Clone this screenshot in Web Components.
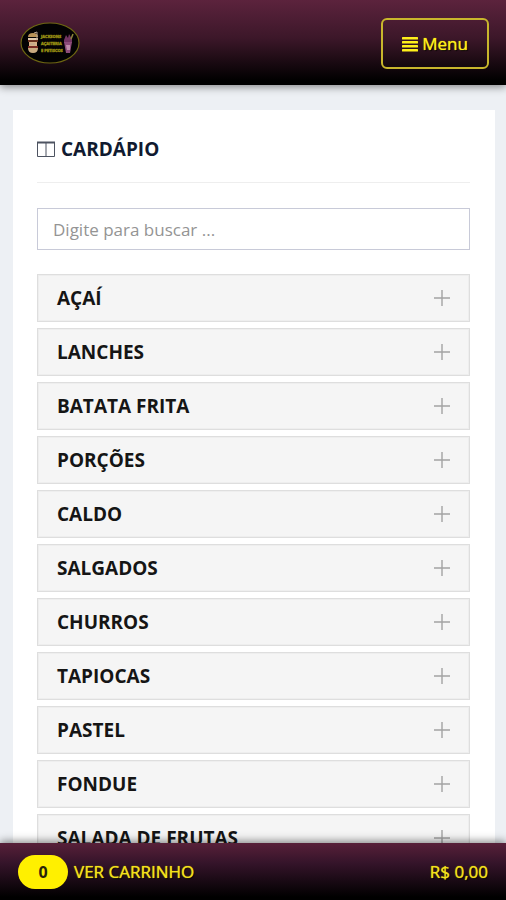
<!DOCTYPE html>
<html lang="pt-BR">
<head>
<meta charset="utf-8">
<meta name="viewport" content="width=device-width, initial-scale=1">
<title>Cardápio</title>
<style>
body { margin: 0; font-family: "Open Sans", "Noto Sans", sans-serif; background: #edf0f4; }
</style>
</head>
<body>
<menu-app></menu-app>
<script>
const define = (name, html, setup) => {
  const template = document.createElement('template');
  template.innerHTML = html;
  customElements.define(name, class extends HTMLElement {
    constructor() {
      super();
      this.attachShadow({ mode: 'open' }).append(template.content.cloneNode(true));
    }
    connectedCallback() { if (setup) setup(this, this.shadowRoot); }
  });
};

define('brand-logo', `
<style>
:host { display: block; }
a { display: block; }
svg { display: block; width: 60px; height: 42px; }
text { font: bold 4px "Open Sans", sans-serif; fill: #aaa016; stroke: #8f8712; stroke-width: .4px; }
</style>
<a href="#" aria-label="Início">
<svg viewBox="0 0 60 42">
  <ellipse cx="30" cy="21" rx="29" ry="20" fill="#030203" stroke="#6e6712" stroke-width="1.2"/>
  <path d="M8 15q0-4 5-4t5 4z" fill="#b99358"/>
  <path d="M8 16h10v2H8z" fill="#e1cbb0"/>
  <path d="M8 18h10v2H8z" fill="#69301f"/>
  <path d="M9 20h8v4H9z" fill="#d7b188"/>
  <path d="M8 24h10v2H8z" fill="#7a2c25"/>
  <path d="M8 26h10q0 5-5 5t-5-5z" fill="#c9aa81"/>
  <path d="M14 11l3-1v8M10 22h5" stroke="#b8a391" fill="none"/>
  <text x="21" y="16">JACKSONS</text>
  <text x="21" y="23">AÇAITERIA</text>
  <text x="21" y="30">E PETISCOS</text>
  <path d="M44 18l2-5 2 3 1-4 3 5v4h-8z" fill="#713460"/>
  <path d="M51 17l2-5" stroke="#8c853b" stroke-width="1.5"/>
  <path d="M44 20h8l-2 11h-4z" fill="#8d4c79"/>
  <path d="M46 23h4v5h-3z" fill="#c08dab"/>
</svg>
</a>`);

define('top-bar', `
<style>
:host { display: block; position: relative; z-index: 1; box-shadow: 0 2px 8px rgba(0,0,0,.45); }
header { display: flex; align-items: center; justify-content: space-between; height: 85px; padding: 0 17px 0 20px; background: linear-gradient(#5c233d, #3c1729 45%, #000 95%); }
button { display: flex; align-items: center; justify-content: center; gap: 4px; width: 108px; height: 51px; margin-top: 2px; padding: 0; border: 2px solid #c8b62c; border-radius: 6px; background: transparent; color: #fff01a; font: 500 17px/24px "Open Sans", sans-serif; text-shadow: 0 0 1px #fff01a, 1px 1px 1px #000; }
svg { width: 16px; height: 16px; }
</style>
<header>
  <brand-logo></brand-logo>
  <button type="button"><svg viewBox="0 0 16 16" fill="#fff01a" aria-hidden="true"><rect y="1" width="16" height="2.400" rx=".5"/><rect y="5" width="16" height="2.400" rx=".5"/><rect y="9" width="16" height="2.400" rx=".5"/><rect y="13" width="16" height="2.400" rx=".5"/></svg><span>Menu</span></button>
</header>`);

define('section-title', `
<style>
:host { display: block; border-bottom: 1px solid #eee; }
h1 { display: flex; align-items: center; gap: 6px; margin: 0; padding: 26px 0 20px; color: #101a30; font-size: 19px; line-height: 26px; font-weight: 700; }
svg { width: 18px; height: 17px; }
</style>
<h1><svg viewBox="0 0 18 17" fill="none" stroke="#4d5361" aria-hidden="true"><path d="M.5 2v13.500h17V2M9 2v13.500"/><path d="M0 1.500h18" stroke-width="2"/></svg><slot></slot></h1>`);

define('search-box', `
<style>
:host { display: block; }
input { display: block; box-sizing: border-box; width: 100%; height: 42px; padding: 0 15px; border: 1px solid #c8cad8; border-radius: 0; background: #fff; color: #333; font: 17px/24px "Open Sans", sans-serif; outline: none; }
input::placeholder { color: #949494; opacity: 1; }
</style>
<input type="search" aria-label="Buscar no cardápio" placeholder="Digite para buscar ...">`);

define('menu-category', `
<style>
:host { display: block; }
button { display: flex; align-items: center; justify-content: space-between; box-sizing: border-box; width: 100%; height: 48px; padding: 0 19px; border: 1px solid #dedede; background: #f5f5f5; color: #151515; font: 700 19px/24px "Open Sans", sans-serif; text-align: left; box-shadow: inset 0 0 0 1px #eee; }
svg { width: 16px; height: 16px; }
</style>
<button type="button" aria-expanded="false"><slot></slot><svg viewBox="0 0 16 16" aria-hidden="true"><path d="M8 0v16M0 8h16" fill="none" stroke="#a3a3a3" stroke-width="1.400"/></svg></button>`);

define('cart-bar', `
<style>
:host { display: block; position: relative; z-index: 1; box-shadow: 0 -2px 8px rgba(0,0,0,.45); }
footer { display: flex; align-items: center; justify-content: space-between; height: 57px; padding: 0 18px; background: linear-gradient(#582039, #35142a 35%, #000 95%); color: #f4e11c; font-size: 17px; line-height: 24px; font-weight: 500; text-shadow: 0 0 1px #f4e11c, 1px 1px 1px #000; }
a { display: flex; align-items: center; gap: 6px; color: inherit; text-decoration: none; }
.count { width: 50px; padding: 5px 0; border-radius: 17px; background: #fff000; color: #29240a; font-size: 16px; font-weight: 700; text-align: center; text-shadow: none; }
</style>
<footer><a href="#"><span class="count">0</span><span>VER CARRINHO</span></a><span>R$ 0,00</span></footer>`);

define('menu-app', `
<style>
:host { display: grid; grid-template-rows: auto minmax(0, 1fr) auto; height: 100vh; }
main { overflow: auto; scrollbar-width: none; padding: 25px 11px 0 13px; }
section { padding: 0 25px 25px 24px; background: #fff; }
search-box { margin: 25px 0 24px; }
.list { display: grid; gap: 6px; }
</style>
<top-bar></top-bar>
<main><section>
  <section-title>CARDÁPIO</section-title>
  <search-box></search-box>
  <div class="list"></div>
</section></main>
<cart-bar></cart-bar>`, (el, root) => {
  const names = ['AÇAÍ', 'LANCHES', 'BATATA FRITA', 'PORÇÕES', 'CALDO', 'SALGADOS', 'CHURROS', 'TAPIOCAS', 'PASTEL', 'FONDUE', 'SALADA DE FRUTAS'];
  root.querySelector('.list').replaceChildren(...names.map(name => {
    const item = document.createElement('menu-category');
    item.textContent = name;
    return item;
  }));
});
</script>
</body>
</html>
